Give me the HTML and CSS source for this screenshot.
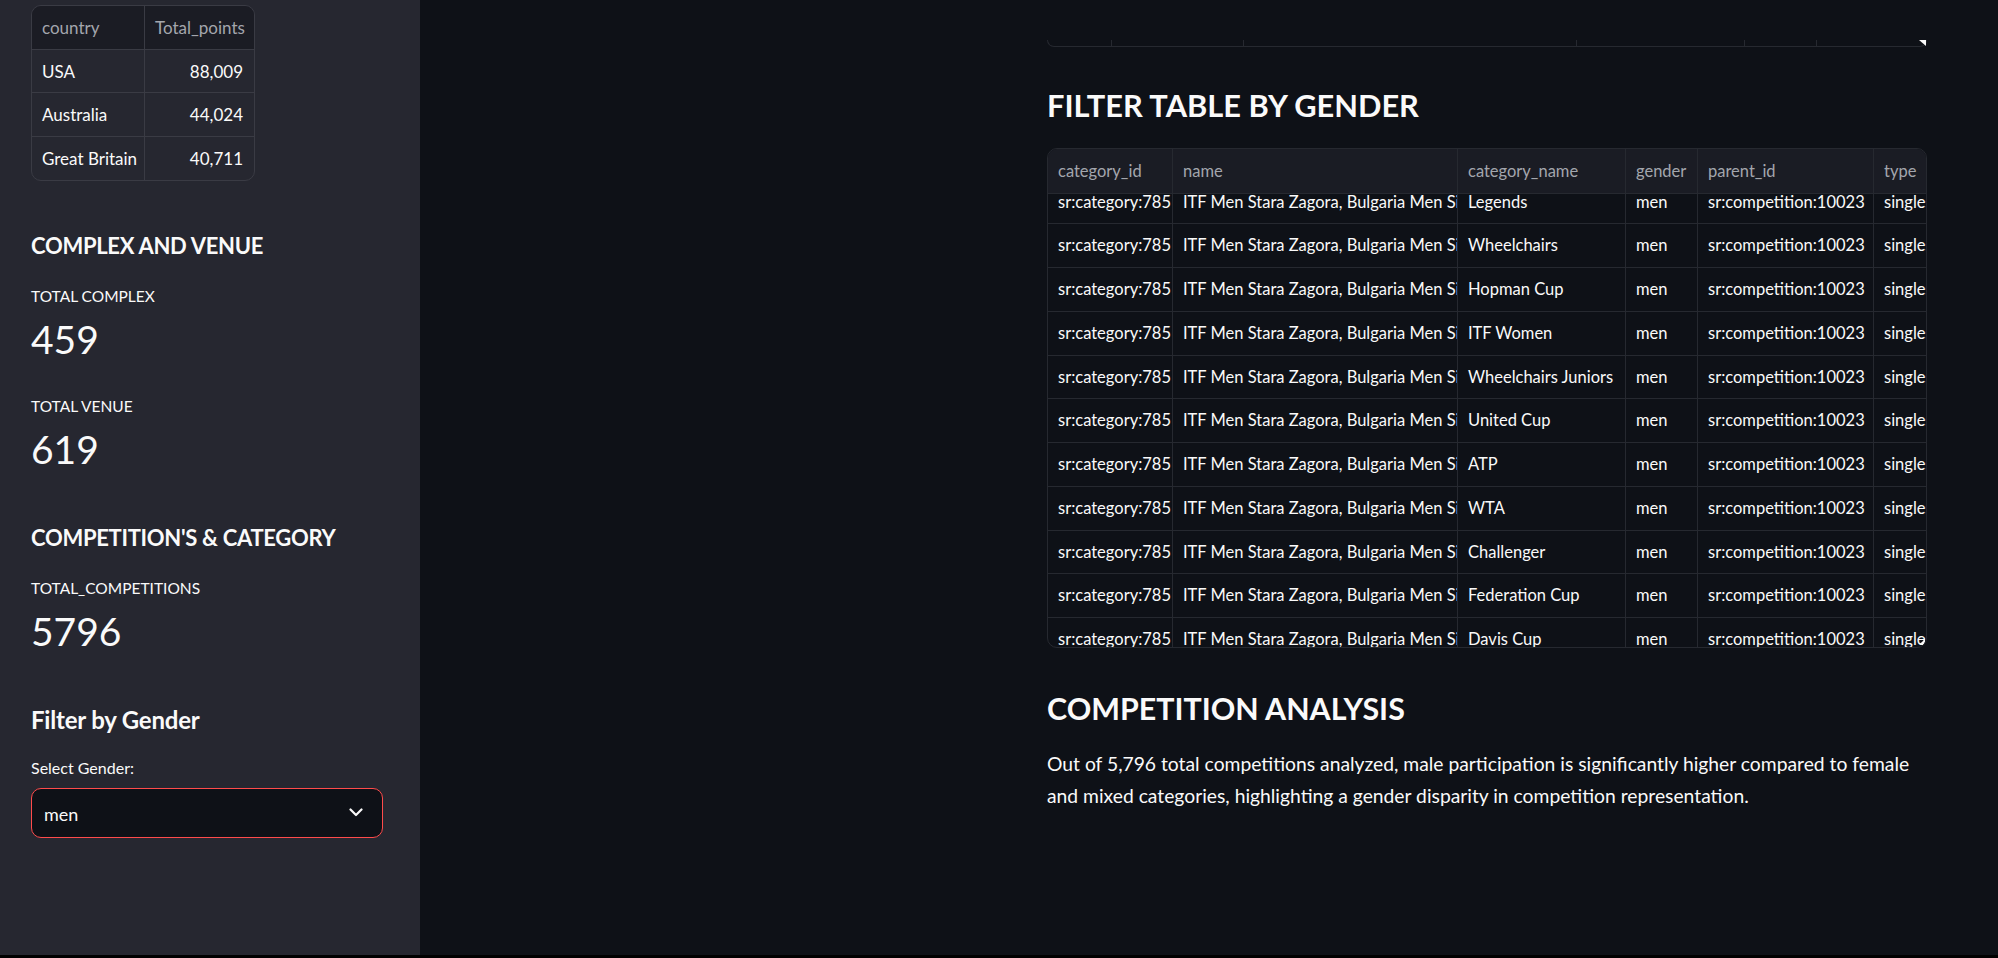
FILE: index.html
```html
<!DOCTYPE html>
<html lang="en">
<head>
<meta charset="utf-8">
<title>Tennis Dashboard</title>
<link rel="stylesheet" href="styles.css">
</head>
<body>
<div class="app">
  <aside class="sidebar">
    <div class="sb-table">
      <div class="sb-row sb-head"><div class="sb-cell">country</div><div class="sb-cell num">Total_points</div></div>
      <div class="sb-row"><div class="sb-cell">USA</div><div class="sb-cell num">88,009</div></div>
      <div class="sb-row"><div class="sb-cell">Australia</div><div class="sb-cell num">44,024</div></div>
      <div class="sb-row"><div class="sb-cell">Great Britain</div><div class="sb-cell num">40,711</div></div>
    </div>

    <h3 class="sb-heading">COMPLEX AND VENUE</h3>
    <div class="metric">
      <div class="metric-label">TOTAL COMPLEX</div>
      <div class="metric-value">459</div>
    </div>
    <div class="metric metric-next">
      <div class="metric-label">TOTAL VENUE</div>
      <div class="metric-value">619</div>
    </div>

    <h3 class="sb-heading">COMPETITION'S &amp; CATEGORY</h3>
    <div class="metric">
      <div class="metric-label">TOTAL_COMPETITIONS</div>
      <div class="metric-value">5796</div>
    </div>

    <h3 class="sb-heading sb-heading-lg">Filter by Gender</h3>
    <div class="sel-label">Select Gender:</div>
    <div class="select">
      <span class="select-value">men</span>
      <svg class="chevron" width="14" height="9" viewBox="0 0 14 9"><path d="M1.5 1.5 L7 7 L12.5 1.5" fill="none" stroke="#fafafa" stroke-width="2.2" stroke-linecap="round" stroke-linejoin="round"/></svg>
    </div>
  </aside>

  <main class="main">
    <div class="spacer"></div>
    <div class="content">
      <div class="prev-table">
        <div class="pt-cell w64"></div>
        <div class="pt-cell w132"></div>
        <div class="pt-cell w333"></div>
        <div class="pt-cell w168"></div>
        <div class="pt-cell w72"></div>
        <div class="pt-cell last"></div>
        <svg class="scroll-corner top" width="7" height="6" viewBox="0 0 7 6"><path d="M0 0 H7 V6 Z" fill="#fafafa"/></svg>
      </div>

      <h2 class="header">FILTER TABLE BY GENDER</h2>

      <div class="grid">
        <div class="g-row g-head">
          <div class="g-cell">category_id</div>
          <div class="g-cell">name</div>
          <div class="g-cell">category_name</div>
          <div class="g-cell">gender</div>
          <div class="g-cell">parent_id</div>
          <div class="g-cell">type</div>
        </div>
        <div class="g-body">
          <div class="g-rows">
            <div class="g-row"><div class="g-cell">sr:category:785</div><div class="g-cell">ITF Men Stara Zagora, Bulgaria Men Singles</div><div class="g-cell">Legends</div><div class="g-cell">men</div><div class="g-cell">sr:competition:10023</div><div class="g-cell">singles</div></div>
            <div class="g-row"><div class="g-cell">sr:category:785</div><div class="g-cell">ITF Men Stara Zagora, Bulgaria Men Singles</div><div class="g-cell">Wheelchairs</div><div class="g-cell">men</div><div class="g-cell">sr:competition:10023</div><div class="g-cell">singles</div></div>
            <div class="g-row"><div class="g-cell">sr:category:785</div><div class="g-cell">ITF Men Stara Zagora, Bulgaria Men Singles</div><div class="g-cell">Hopman Cup</div><div class="g-cell">men</div><div class="g-cell">sr:competition:10023</div><div class="g-cell">singles</div></div>
            <div class="g-row"><div class="g-cell">sr:category:785</div><div class="g-cell">ITF Men Stara Zagora, Bulgaria Men Singles</div><div class="g-cell">ITF Women</div><div class="g-cell">men</div><div class="g-cell">sr:competition:10023</div><div class="g-cell">singles</div></div>
            <div class="g-row"><div class="g-cell">sr:category:785</div><div class="g-cell">ITF Men Stara Zagora, Bulgaria Men Singles</div><div class="g-cell">Wheelchairs Juniors</div><div class="g-cell">men</div><div class="g-cell">sr:competition:10023</div><div class="g-cell">singles</div></div>
            <div class="g-row"><div class="g-cell">sr:category:785</div><div class="g-cell">ITF Men Stara Zagora, Bulgaria Men Singles</div><div class="g-cell">United Cup</div><div class="g-cell">men</div><div class="g-cell">sr:competition:10023</div><div class="g-cell">singles</div></div>
            <div class="g-row"><div class="g-cell">sr:category:785</div><div class="g-cell">ITF Men Stara Zagora, Bulgaria Men Singles</div><div class="g-cell">ATP</div><div class="g-cell">men</div><div class="g-cell">sr:competition:10023</div><div class="g-cell">singles</div></div>
            <div class="g-row"><div class="g-cell">sr:category:785</div><div class="g-cell">ITF Men Stara Zagora, Bulgaria Men Singles</div><div class="g-cell">WTA</div><div class="g-cell">men</div><div class="g-cell">sr:competition:10023</div><div class="g-cell">singles</div></div>
            <div class="g-row"><div class="g-cell">sr:category:785</div><div class="g-cell">ITF Men Stara Zagora, Bulgaria Men Singles</div><div class="g-cell">Challenger</div><div class="g-cell">men</div><div class="g-cell">sr:competition:10023</div><div class="g-cell">singles</div></div>
            <div class="g-row"><div class="g-cell">sr:category:785</div><div class="g-cell">ITF Men Stara Zagora, Bulgaria Men Singles</div><div class="g-cell">Federation Cup</div><div class="g-cell">men</div><div class="g-cell">sr:competition:10023</div><div class="g-cell">singles</div></div>
            <div class="g-row"><div class="g-cell">sr:category:785</div><div class="g-cell">ITF Men Stara Zagora, Bulgaria Men Singles</div><div class="g-cell">Davis Cup</div><div class="g-cell">men</div><div class="g-cell">sr:competition:10023</div><div class="g-cell">singles</div></div>
          </div>
        </div>
        <svg class="scroll-corner bottom" width="7" height="7" viewBox="0 0 7 7"><path d="M7 0 V7 H0 Q5 6 7 0 Z" fill="#fafafa"/></svg>
      </div>

      <h2 class="header header-2">COMPETITION ANALYSIS</h2>
      <p class="para">Out of 5,796 total competitions analyzed, male participation is significantly higher compared to female and mixed categories, highlighting a gender disparity in competition representation.</p>
    </div>
  </main>
</div>
<div class="bottom-bar"></div>
</body>
</html>
```

FILE: styles.css
```css
* { box-sizing: border-box; }

html, body {
  margin: 0;
  padding: 0;
  height: 958px;
  overflow: hidden;
  background: #0e1117;
  font-family: "Lato", "Liberation Sans", sans-serif;
  color: #fafafa;
}

body {
  display: flex;
  flex-direction: column;
}

.app {
  flex: 1;
  display: flex;
  min-height: 0;
}

.bottom-bar {
  height: 3px;
  background: #000;
}

/* ---------- Sidebar ---------- */
.sidebar {
  width: 420px;
  flex: none;
  background: #262730;
  padding: 5px 37px 0 31px;
  display: flex;
  flex-direction: column;
  align-items: flex-start;
}

.sb-table {
  width: 224px;
  border: 1px solid #3a3b44;
  border-radius: 10px;
  overflow: hidden;
}

.sb-row {
  display: grid;
  grid-template-columns: 113px 1fr;
  height: 43.5px;
  border-bottom: 1px solid #3a3b44;
}
.sb-row:last-child { border-bottom: none; }

.sb-head { background: #1b1c24; color: #a4a6ad; }

.sb-cell {
  padding: 0 10px;
  font-size: 17px;
  line-height: 43px;
  white-space: nowrap;
  overflow: hidden;
}
.sb-cell:first-child { border-right: 1px solid #3a3b44; }
.sb-cell.num { text-align: right; padding-right: 11px; }

.sb-heading {
  margin: 50px 0 0;
  font-size: 22px;
  line-height: 30px;
  font-weight: 700;
  letter-spacing: -0.3px;
  color: #fafafa;
}

.sb-heading-lg {
  font-size: 24px;
  letter-spacing: -0.2px;
}

.metric { margin-top: 25px; }
.metric-next { margin-top: 33px; }

.metric-label {
  font-size: 15.5px;
  line-height: 20px;
  color: #fafafa;
}

.metric-value {
  margin-top: 9px;
  font-size: 39px;
  line-height: 48px;
  font-weight: 400;
}

.sel-label {
  margin-top: 23px;
  font-size: 16px;
  line-height: 20px;
}

.select {
  margin-top: 10px;
  width: 352px;
  height: 50px;
  border: 1px solid #ff4b4b;
  border-radius: 10px;
  background: #0e1117;
  display: flex;
  align-items: center;
  justify-content: space-between;
  padding: 2px 19px 0 12px;
}

.select-value {
  font-size: 18px;
  line-height: 22px;
}

.chevron { display: block; margin-top: -4px; }

/* ---------- Main ---------- */
.main {
  flex: 1;
  display: grid;
  grid-template-columns: 627px 880px;
  padding-top: 40px;
  align-content: start;
}

.content {
  display: flex;
  flex-direction: column;
  align-items: stretch;
}

.prev-table {
  position: relative;
  display: flex;
  height: 7px;
  border: 1px solid #262930;
  border-top: none;
  border-radius: 0 0 10px 10px;
}

.pt-cell { border-right: 1px solid #262930; height: 6px; }
.pt-cell.w64 { width: 64px; }
.pt-cell.w132 { width: 132px; }
.pt-cell.w333 { width: 333px; }
.pt-cell.w168 { width: 168px; }
.pt-cell.w72 { width: 72px; }
.pt-cell.last { flex: 1; border-right: none; }

.scroll-corner { position: absolute; display: block; }
.scroll-corner.top { right: 0; top: 0; }
.scroll-corner.bottom { right: 1px; bottom: 3px; }

.header {
  margin: 41px 0 0;
  font-size: 30.8px;
  line-height: 36px;
  font-weight: 700;
  color: #fafafa;
}

.header-2 { margin-top: 42px; font-size: 30.4px; }

.grid {
  position: relative;
  margin-top: 24px;
  border: 1px solid #262930;
  border-radius: 10px;
  overflow: hidden;
}

.g-row {
  display: grid;
  grid-template-columns: 125px 285px 168px 72px 176px 52px;
  height: 43.75px;
  border-bottom: 1px solid #262930;
}

.g-head {
  height: 45px;
  background: #1a1c24;
  color: #a3a6ad;
}

.g-body {
  height: 453px;
  overflow: hidden;
}

.g-rows { margin-top: -13.5px; }

.g-cell {
  padding: 0 10px;
  font-size: 16.5px;
  line-height: 43px;
  white-space: nowrap;
  overflow: hidden;
  text-overflow: clip;
  border-right: 1px solid #262930;
}
.g-head .g-cell { line-height: 44px; }
.g-cell:last-child { border-right: none; padding-right: 0; }

.para {
  margin: 22px 0 0;
  font-size: 19.3px;
  line-height: 31.5px;
  color: #fafafa;
}
```
